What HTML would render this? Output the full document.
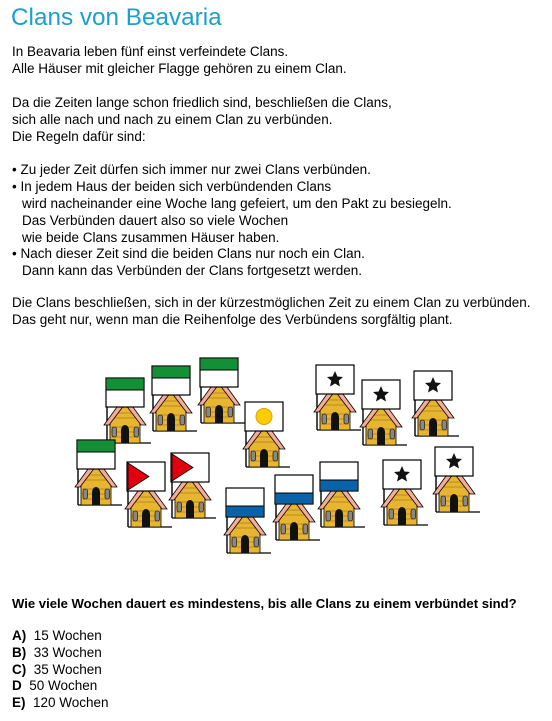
<!DOCTYPE html><html><head><meta charset="utf-8"><style>
body{margin:0;width:552px;height:721px;background:#fff;font-family:"Liberation Sans",sans-serif;font-size:13.5px;color:#000;position:relative;overflow:hidden}
.t{position:absolute;left:12px;white-space:nowrap}
h1{position:absolute;left:11px;top:4px;margin:0;font-weight:normal;font-size:24.3px;color:#1a9fd0}
svg{position:absolute;left:0;top:0}
</style></head><body>
<h1>Clans von Beavaria</h1>
<div class="t" style="top:44px">In Beavaria leben fünf einst verfeindete Clans.</div>
<div class="t" style="top:61px">Alle Häuser mit gleicher Flagge gehören zu einem Clan.</div>
<div class="t" style="top:95px">Da die Zeiten lange schon friedlich sind, beschließen die Clans,</div>
<div class="t" style="top:112px">sich alle nach und nach zu einem Clan zu verbünden.</div>
<div class="t" style="top:129px">Die Regeln dafür sind:</div>
<div class="t" style="top:162px">• Zu jeder Zeit dürfen sich immer nur zwei Clans verbünden.</div>
<div class="t" style="top:179px">• In jedem Haus der beiden sich verbündenden Clans</div>
<div class="t" style="top:196px;left:22px">wird nacheinander eine Woche lang gefeiert, um den Pakt zu besiegeln.</div>
<div class="t" style="top:213px;left:22px">Das Verbünden dauert also so viele Wochen</div>
<div class="t" style="top:230px;left:22px">wie beide Clans zusammen Häuser haben.</div>
<div class="t" style="top:246px">• Nach dieser Zeit sind die beiden Clans nur noch ein Clan.</div>
<div class="t" style="top:263px;left:22px">Dann kann das Verbünden der Clans fortgesetzt werden.</div>
<div class="t" style="top:295px">Die Clans beschließen, sich in der kürzestmöglichen Zeit zu einem Clan zu verbünden.</div>
<div class="t" style="top:312px">Das geht nur, wenn man die Reihenfolge des Verbündens sorgfältig plant.</div>
<div class="t" style="top:596px;font-weight:bold;font-size:13.1px">Wie viele Wochen dauert es mindestens, bis alle Clans zu einem verbündet sind?</div>
<div class="t" style="top:628px"><b>A)</b>&nbsp; 15 Wochen</div>
<div class="t" style="top:645px"><b>B)</b>&nbsp; 33 Wochen</div>
<div class="t" style="top:662px"><b>C)</b>&nbsp; 35 Wochen</div>
<div class="t" style="top:678px"><b>D</b>&nbsp; 50 Wochen</div>
<div class="t" style="top:695px"><b>E)</b>&nbsp; 120 Wochen</div>
<svg width="552" height="721">
<defs>
<g id="h">
<line x1="1" y1="29" x2="1" y2="65" stroke="#000" stroke-width="1.4"/>
<line x1="1" y1="65" x2="45" y2="65" stroke="#000" stroke-width="1.2"/>
<polygon points="19,22 4,44 4,65 34,65 34,44" fill="#e8b530" stroke="#000" stroke-width="0.8"/>
<path d="M4 49h30M4 54h30M4 59h30M10 35h18M7 40h24" stroke="#8a6010" stroke-width="0.6"/>
<polygon points="19,18 -2,47 3,47 19,26 35,47 40,47" fill="#f3ac98" stroke="#000" stroke-width="0.8"/>
<path d="M15 65v-13a4 5 0 0 1 8 0v13z" fill="#111"/>
<rect x="6" y="49" width="4.5" height="10" rx="2" fill="#888" stroke="#000" stroke-width="0.6"/>
<rect x="28" y="49" width="4.5" height="10" rx="2" fill="#888" stroke="#000" stroke-width="0.6"/>
<rect x="0" y="0" width="38" height="29" fill="#fff" stroke="#000" stroke-width="1.2"/>
</g>
<g id="g"><use href="#h"/><rect x="0.6" y="0.6" width="36.8" height="11.5" fill="#119035"/><line x1="0" y1="12" x2="38" y2="12" stroke="#000"/></g>
<g id="b"><use href="#h"/><rect x="0.6" y="18" width="36.8" height="10.4" fill="#0a63a8"/><line x1="0" y1="18" x2="38" y2="18" stroke="#000"/></g>
<g id="r"><use href="#h"/><polygon points="1,1 1,28 22,14.5" fill="#e0000f" stroke="#000" stroke-width="0.8"/></g>
<g id="s"><use href="#h"/><polygon points="19,6 21.4,11.5 27,12 22.7,15.7 24,21.5 19,18.5 14,21.5 15.3,15.7 11,12 16.6,11.5" fill="#111"/></g>
<g id="y"><use href="#h"/><circle cx="19" cy="14.5" r="8" fill="#ffcc00" stroke="#d9a000"/></g>
</defs>
<use href="#g" x="106" y="378"/>
<use href="#g" x="152" y="366"/>
<use href="#g" x="200" y="358"/>
<use href="#g" x="77" y="440"/>
<use href="#r" x="127" y="462"/>
<use href="#r" x="171" y="453"/>
<use href="#y" x="245" y="402"/>
<use href="#b" x="226" y="488"/>
<use href="#b" x="275" y="475"/>
<use href="#b" x="320" y="462"/>
<use href="#s" x="316" y="365"/>
<use href="#s" x="362" y="380"/>
<use href="#s" x="414" y="371"/>
<use href="#s" x="383" y="460"/>
<use href="#s" x="435" y="447"/>
</svg>
</body></html>
